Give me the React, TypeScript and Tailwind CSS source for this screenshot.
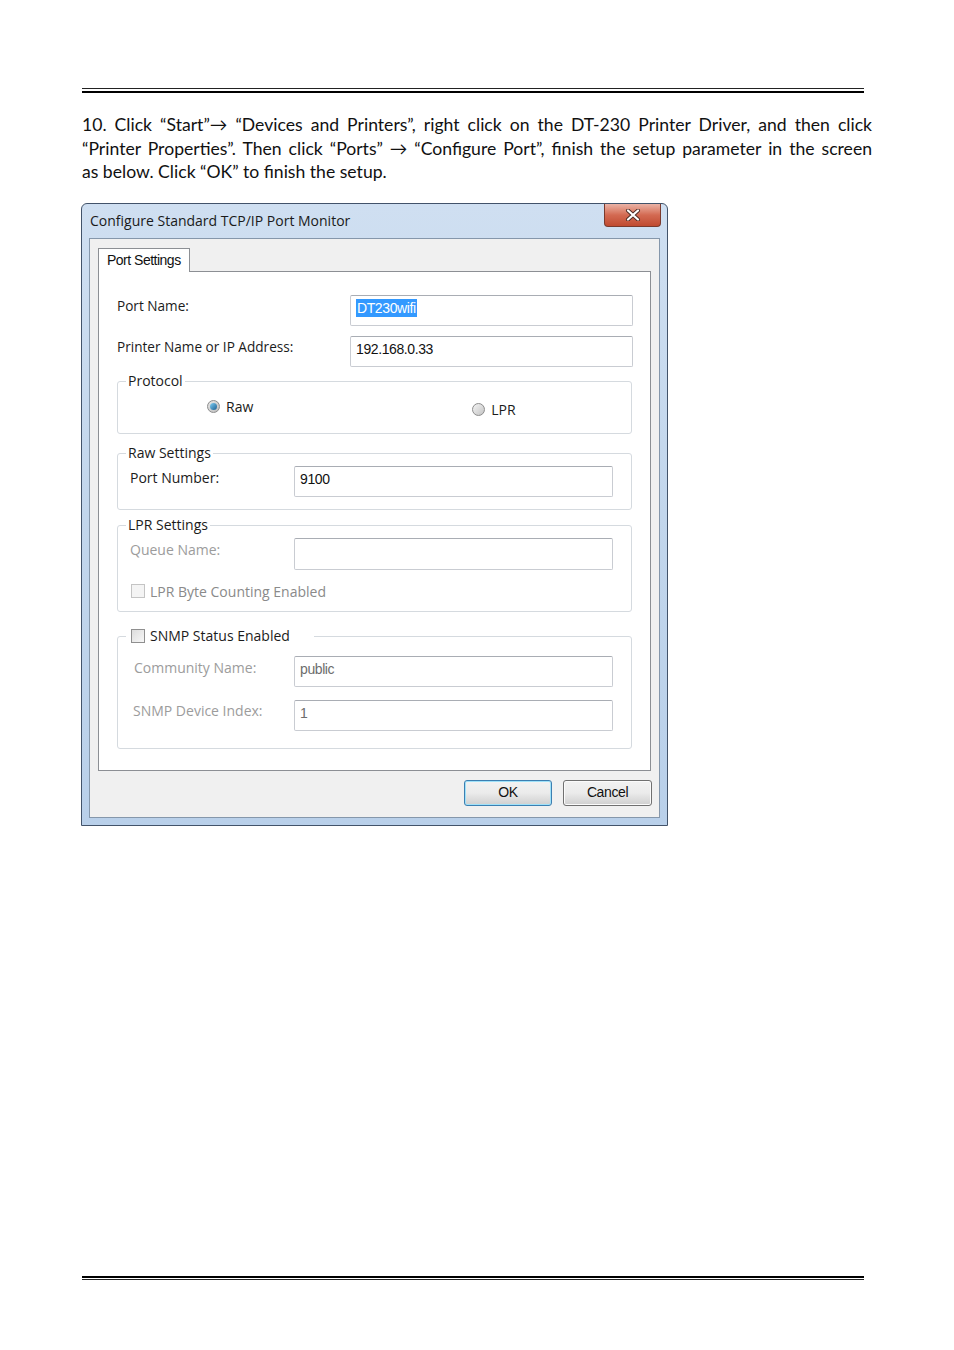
import React from "react"

const ui = { fontFamily: '"Open Sans", "Noto Sans", sans-serif' }
const classic = { fontFamily: '"Liberation Sans", Arial, sans-serif' }

function TextBox({ value, selected, disabled }: { value?: string; selected?: boolean; disabled?: boolean }) {
  return (
    <div
      className={`h-full w-full rounded-[2px] border border-[#c9ccd2] border-t-[#a9adb4] bg-white px-[5px] pb-[4px] flex items-center text-[14px] tracking-[-0.4px] ${disabled ? "text-[#6d6d6d]" : "text-[#111]"}`}
      style={classic}
    >
      {selected ? <span className="bg-[#3399ff] text-white px-px leading-[18px]">{value}</span> : value}
    </div>
  )
}

function Group({ title, legend, className, children }: { title?: string; legend?: React.ReactNode; className: string; children: React.ReactNode }) {
  return (
    <div className={`relative rounded-[3px] border border-[#d5dadf] ${className}`}>
      <div className="absolute -top-[10px] left-[8px] bg-white px-[2px] text-[14px] leading-[18px] text-[#1b1b1b] flex items-center" style={ui}>
        {legend ?? title}
      </div>
      {children}
    </div>
  )
}

function CheckBox() {
  return <div className="w-[14px] h-[14px] border border-[#8f8f8f] bg-gradient-to-br from-[#dcdcdc] to-[#f7f7f7]" />
}

export default function App() {
  return (
    <div className="w-[954px] h-[1350px] bg-white relative">
      <div className="px-[82px] pt-[88px]">
        {/* header rule */}
        <div className="w-[782px]">
          <div className="h-px bg-[#222]" />
          <div className="h-[2px] mt-[2px] bg-black" />
        </div>

        {/* instructions */}
        <div className="mt-[20px] w-[790px] text-[17.6px] leading-[23.5px] text-[#111]" style={{ fontFamily: 'Lato, "Liberation Sans", sans-serif' }}>
          <p className="text-justify [text-align-last:justify]">10. Click “Start”→ “Devices and Printers”, right click on the DT-230 Printer Driver, and then click</p>
          <p className="text-justify [text-align-last:justify]">“Printer Properties”. Then click “Ports” → “Configure Port”, finish the setup parameter in the screen</p>
          <p>as below. Click “OK” to finish the setup.</p>
        </div>

        {/* dialog */}
        <div className="mt-[19px] -ml-px w-[587px] h-[623px] rounded-t-[6px] border border-[#42536a] bg-gradient-to-b from-[#cfdff1] via-[#c2d6ec] to-[#b9d0ea] flex flex-col">
          <div className="h-[34px] flex items-start justify-between pl-[8px] pr-[6px]">
            <div className="mt-[6px] text-[14px] text-[#1a1a1a]" style={ui}>Configure Standard TCP/IP Port Monitor</div>
            <div className="w-[57px] h-[23px] rounded-b-[4px] border border-t-0 border-[#7a3a2d] bg-gradient-to-b from-[#eab3a6] via-[#d36a52] to-[#c04a30] flex items-center justify-center">
              <svg width="16" height="12" viewBox="0 0 16 12">
                <path d="M3 1.5 L13 10.5 M13 1.5 L3 10.5" stroke="#4a2a24" strokeWidth="4" strokeLinecap="round" />
                <path d="M3 1.5 L13 10.5 M13 1.5 L3 10.5" stroke="#ffffff" strokeWidth="2.2" strokeLinecap="round" />
              </svg>
            </div>
          </div>

          <div className="mx-[7px] h-[580px] border border-[#8597ab] bg-[#f0f0f0] flex flex-col">
            <div className="pt-[9px] pl-[8px]">
              <div className="relative z-10 w-[92px] h-[24px] border border-b-0 border-[#8c8f94] bg-white -mb-px pl-[8px] pt-[1px] text-[14px] tracking-[-0.5px] text-[#111]" style={classic}>
                Port Settings
              </div>
              <div className="w-[553px] h-[500px] border border-[#8c8f94] bg-white pl-[18px] pt-[23px]">
                <div className="flex items-center h-[31px]">
                  <div className="w-[233px] -mt-[8px] text-[13.6px] text-[#1b1b1b]" style={ui}>Port Name:</div>
                  <div className="w-[283px] h-full"><TextBox value="DT230wifi" selected /></div>
                </div>
                <div className="flex items-center h-[31px] mt-[10px]">
                  <div className="w-[233px] -mt-[8px] text-[13.6px] text-[#1b1b1b]" style={ui}>Printer Name or IP Address:</div>
                  <div className="w-[283px] h-full"><TextBox value="192.168.0.33" /></div>
                </div>

                <Group title="Protocol" className="w-[515px] h-[53px] mt-[14px]">
                  <div className="flex items-center pt-[12px] text-[14px] text-[#1b1b1b]" style={ui}>
                    <div className="ml-[89px] flex items-center gap-[6px]">
                      <div className="w-[13px] h-[13px] rounded-full border border-[#8c8c8c] bg-gradient-to-br from-[#e8e8e8] to-[#bdbdbd] flex items-center justify-center">
                        <div className="w-[7px] h-[7px] rounded-full bg-gradient-to-br from-[#7fd0f5] to-[#1c5f91]" />
                      </div>
                      Raw
                    </div>
                    <div className="ml-[219px] mt-[5px] flex items-center gap-[6px]">
                      <div className="w-[13px] h-[13px] rounded-full border border-[#8c8c8c] bg-gradient-to-br from-[#f4f4f4] to-[#c4c4c4]" />
                      LPR
                    </div>
                  </div>
                </Group>

                <Group title="Raw Settings" className="w-[515px] h-[57px] mt-[19px]">
                  <div className="flex items-center mt-[12px] h-[31px]">
                    <div className="ml-[12px] w-[164px] -mt-[8px] text-[14px] text-[#1b1b1b]" style={ui}>Port Number:</div>
                    <div className="w-[319px] h-full"><TextBox value="9100" /></div>
                  </div>
                </Group>

                <Group title="LPR Settings" className="w-[515px] h-[87px] mt-[15px]">
                  <div className="flex items-center mt-[12px] h-[32px]">
                    <div className="ml-[12px] w-[164px] -mt-[8px] text-[14px] text-[#9c9c9c]" style={ui}>Queue Name:</div>
                    <div className="w-[319px] h-full"><TextBox /></div>
                  </div>
                  <div className="flex items-center gap-[5px] ml-[13px] mt-[11px] text-[14px] text-[#8a8a8a]" style={ui}>
                    <div className="w-[14px] h-[14px] border border-[#c4c4c4] bg-[#f4f4f4]" />
                    LPR Byte Counting Enabled
                  </div>
                </Group>

                <Group
                  legend={
                    <span className="flex items-center gap-[5px] ml-[3px] pr-[22px]">
                      <CheckBox />
                      SNMP Status Enabled
                    </span>
                  }
                  className="w-[515px] h-[113px] mt-[24px]"
                >
                  <div className="flex items-center mt-[19px] h-[31px]">
                    <div className="ml-[16px] w-[160px] -mt-[8px] text-[14px] text-[#9c9c9c]" style={ui}>Community Name:</div>
                    <div className="w-[319px] h-full"><TextBox value="public" disabled /></div>
                  </div>
                  <div className="flex items-center mt-[13px] h-[31px]">
                    <div className="ml-[15px] w-[161px] -mt-[9px] text-[14px] text-[#9c9c9c]" style={ui}>SNMP Device Index:</div>
                    <div className="w-[319px] h-full"><TextBox value="1" disabled /></div>
                  </div>
                </Group>
              </div>
            </div>

            <div className="mt-[9px] pr-[7px] flex justify-end gap-[11px] text-[14px] tracking-[-0.4px] text-[#111]" style={classic}>
              <div className="w-[88px] h-[26px] rounded-[3px] border border-[#3c7fb1] shadow-[inset_0_0_0_1px_#9fe1f9] bg-gradient-to-b from-[#f2f2f2] via-[#ebebeb] to-[#cfcfcf] flex items-center justify-center">OK</div>
              <div className="w-[89px] h-[26px] rounded-[3px] border border-[#707070] shadow-[inset_0_0_0_1px_#fbfbfb] bg-gradient-to-b from-[#f2f2f2] via-[#ebebeb] to-[#cfcfcf] flex items-center justify-center">Cancel</div>
            </div>
          </div>
        </div>
      </div>

      {/* footer rule */}
      <div className="absolute left-[82px] top-[1276px] w-[782px]">
        <div className="h-[2px] bg-black" />
        <div className="h-px mt-px bg-[#222]" />
      </div>
    </div>
  )
}
